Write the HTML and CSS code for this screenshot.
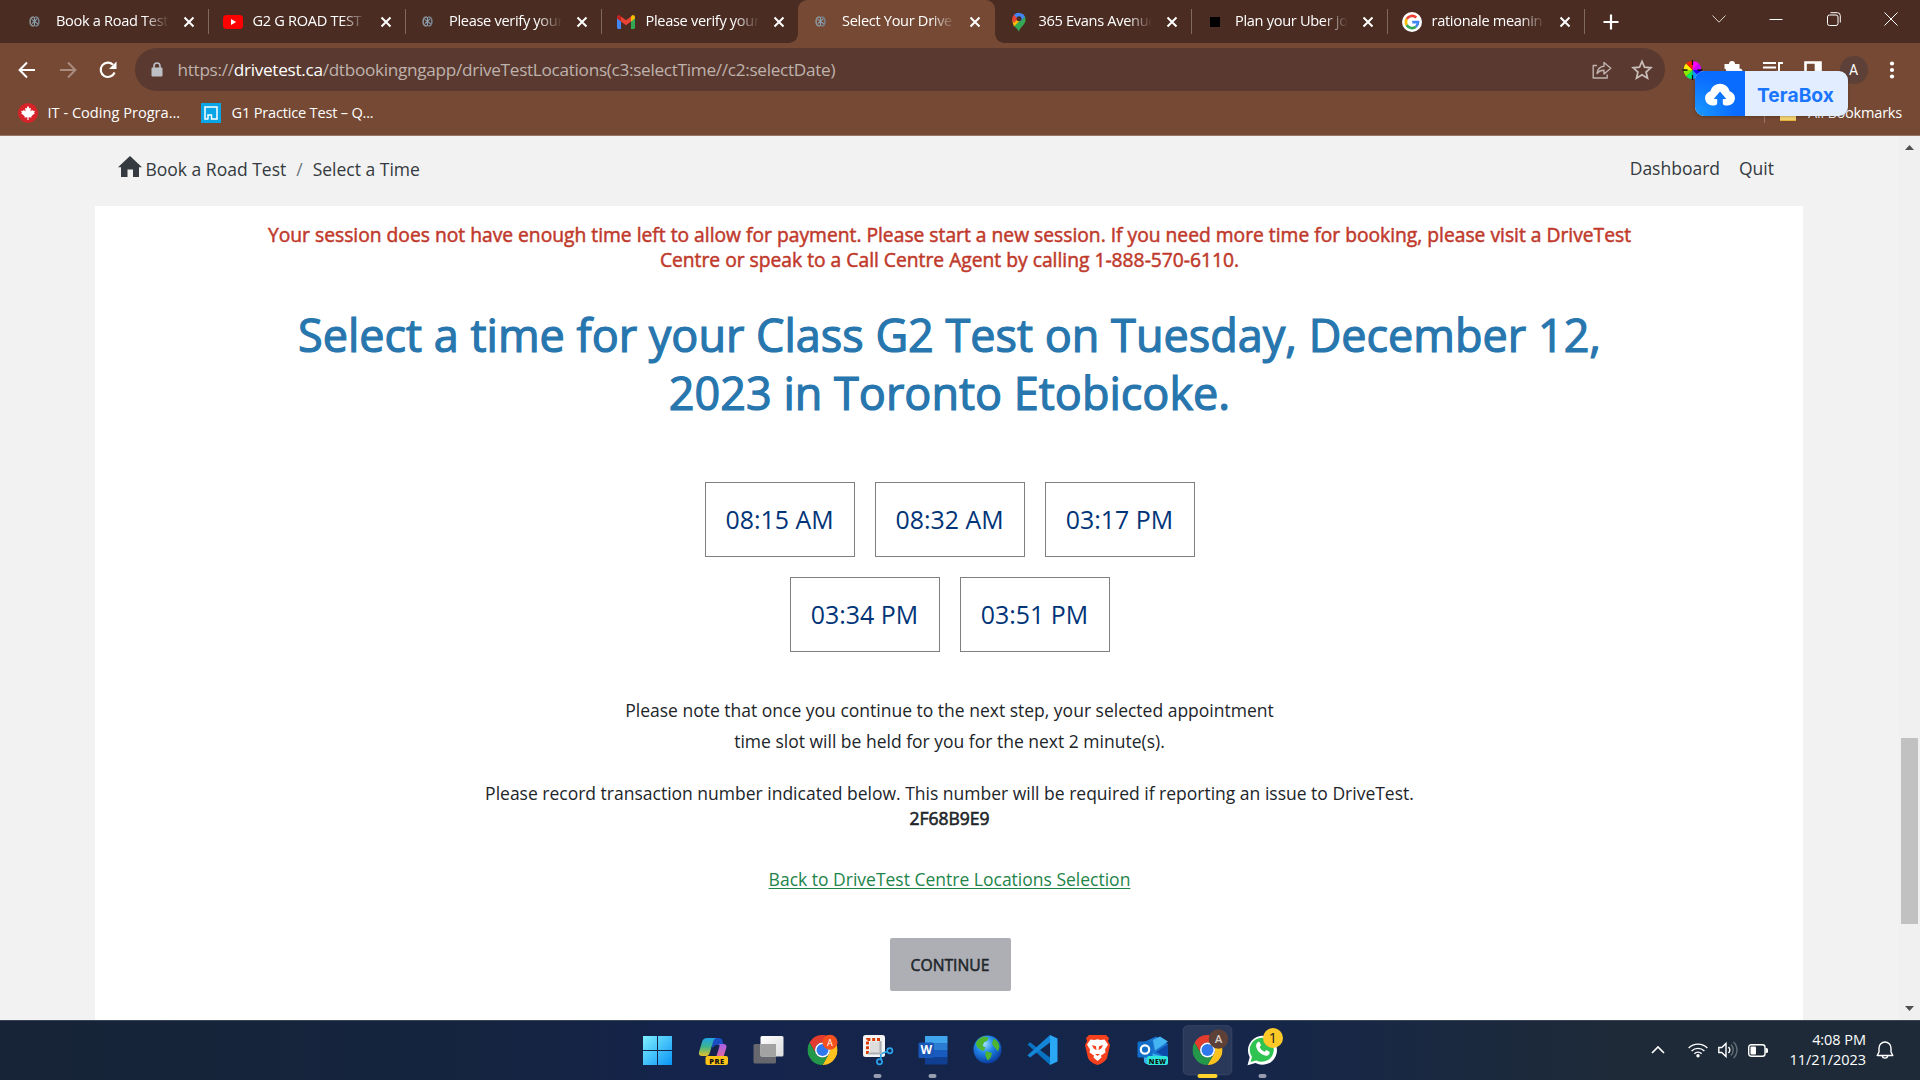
FILE: index.html
```
<!DOCTYPE html>
<html lang="en">
<head>
<meta charset="utf-8">
<title>Select Your DriveTest Time</title>
<link rel="stylesheet" href="styles.css">
</head>
<body>
<svg class="defs" width="0" height="0">
  <symbol id="close" viewBox="0 0 12 12"><path d="M1.5 1.5l9 9M10.5 1.5l-9 9" stroke="#fff" stroke-width="2" fill="none"/></symbol>
  <symbol id="drive" viewBox="0 0 12 12"><g fill="none" stroke-width="1.7"><path d="M5.4 1C2 1 1.200 3.500 1.200 6s1 5 4.200 5" stroke="#8d9296"/><path d="M6.800 1C10 1 10.800 3.500 10.800 6s-1 5-4 5" stroke="#76828c"/><path d="M3 3.700l6.500 4.800M3.500 8.200L8.800 3.200M6 1v10" stroke="#8aa0ae" stroke-width="1.200"/></g></symbol>
  <symbol id="chrome" viewBox="-15 -15 30 30">
    <path d="M-13-7.500A15 15 0 0 1 13-7.500L0-7.500A7.500 7.500 0 0 0-6.500 3.750Z" fill="#e33b2e"/>
    <path d="M-13-7.500A15 15 0 0 1 13-7.500L0-7.500A7.500 7.500 0 0 0-6.500 3.750Z" fill="#fcc31e" transform="rotate(120)"/>
    <path d="M-13-7.500A15 15 0 0 1 13-7.500L0-7.500A7.500 7.500 0 0 0-6.500 3.750Z" fill="#23974a" transform="rotate(240)"/>
    <circle r="7.500" fill="#fff"/><circle r="6" fill="#2f78ee"/>
  </symbol>
</svg>

<header class="browser">
  <div class="tabstrip">
    <div class="tab"><svg class="fav fav-s"><use href="#drive"/></svg><span class="title">Book a Road Test</span><svg class="x"><use href="#close"/></svg></div>
    <div class="tab"><svg class="fav" viewBox="0 0 20 20"><rect y="3" width="20" height="14" rx="3.500" fill="#f00"/><path d="M8 7l5.200 3L8 13z" fill="#fff"/></svg><span class="title">G2 G ROAD TEST</span><svg class="x"><use href="#close"/></svg></div>
    <div class="tab"><svg class="fav fav-s"><use href="#drive"/></svg><span class="title">Please verify your</span><svg class="x"><use href="#close"/></svg></div>
    <div class="tab no-sep"><svg class="fav" viewBox="0 0 20 20"><path d="M1 6v9.500A1.500 1.500 0 0 0 2.500 17H5V8z" fill="#4285f4"/><path d="M19 6v9.500a1.500 1.500 0 0 1-1.500 1.500H15V8z" fill="#34a853"/><path d="M15 4.500v5l4-3V5a2 2 0 0 0-3.200-1.600z" fill="#fbbc04"/><path d="M5 9.500v-5l5 3.700 5-3.700v5l-5 3.800z" fill="#ea4335"/><path d="M1 5v1.500l4 3v-5L4.200 3.400A2 2 0 0 0 1 5z" fill="#c5221f"/></svg><span class="title">Please verify your</span><svg class="x"><use href="#close"/></svg></div>
    <div class="tab active"><svg class="fav fav-s"><use href="#drive"/></svg><span class="title">Select Your Drive</span><svg class="x"><use href="#close"/></svg></div>
    <div class="tab"><svg class="fav" viewBox="0 0 20 20"><path d="M10 20c0-4 5.500-6.500 6.500-11a6.800 6.800 0 0 0-1-5L5 14c2.200 2 4 3.500 5 6z" fill="#34a853"/><path d="M5 14.500L12 7.500 8 4 3.400 8c.1 2.500.8 4.500 1.600 6.500z" fill="#fbbc04"/><path d="M3.500 9A7 7 0 0 1 5.200 2.500L9.500 6 5 11z" fill="#ea4335"/><path d="M5 2.800A6.800 6.800 0 0 1 16 4.700L11.500 9.500 8 6z" fill="#4285f4"/><circle cx="10" cy="6.800" r="2.500" fill="#4a2c22"/></svg><span class="title">365 Evans Avenue</span><svg class="x"><use href="#close"/></svg></div>
    <div class="tab"><svg class="fav" viewBox="0 0 20 20"><path d="M5 5h10v10H5z"/></svg><span class="title">Plan your Uber jo</span><svg class="x"><use href="#close"/></svg></div>
    <div class="tab"><svg class="fav" viewBox="0 0 20 20"><circle cx="10" cy="10" r="10" fill="#fff"/><g fill="none" stroke-width="2.600"><path d="M14.300 5.700A6.100 6.100 0 0 0 4.700 7" stroke="#ea4335"/><path d="M4.700 7a6.100 6.100 0 0 0 0 6" stroke="#fbbc05"/><path d="M4.700 13a6.100 6.100 0 0 0 9.200 1.700" stroke="#34a853"/><path d="M10.200 10.100h5.900a6.100 6.100 0 0 1-2.200 4.600" stroke="#4285f4"/></g></svg><span class="title">rationale meanin</span><svg class="x"><use href="#close"/></svg></div>
    <svg class="plus" viewBox="0 0 16 16"><path d="M8 0.500v15M0.500 8h15" stroke="#fff" stroke-width="2.200"/></svg>
    <div class="winctl">
      <svg viewBox="0 0 14 14"><path d="M.5 3.500L7 10.200l6.500-6.700" fill="none" stroke="#d9d2cf"/></svg>
      <svg viewBox="0 0 14 14"><path d="M.5 7.500h13" stroke="#fff"/></svg>
      <svg viewBox="0 0 14 14"><g fill="none" stroke="#fff"><rect x=".5" y="3" width="10.500" height="10.500" rx="2"/><path d="M3.500.7h6.800a3 3 0 0 1 3 3v6.800"/></g></svg>
      <svg viewBox="0 0 14 14"><path d="M.5.500l13 13M13.500.500l-13 13" stroke="#fff"/></svg>
    </div>
  </div>

  <div class="toolbar">
    <nav class="navbtns">
      <svg viewBox="0 0 18 18"><path d="M17 9H2M9 1.500L1.600 9 9 16.500" fill="none" stroke="#fff" stroke-width="2"/></svg>
      <svg viewBox="0 0 18 18"><path d="M1 9h15M9 1.500L16.400 9 9 16.500" fill="none" stroke="#a98b7f" stroke-width="2"/></svg>
      <svg viewBox="0 0 18 18"><path d="M15.600 11.500A7.200 7.200 0 1 1 14 3.700" fill="none" stroke="#fff" stroke-width="2.100"/><path d="M17.500.500V8H10z" fill="#fff"/></svg>
    </nav>
    <div class="omnibox">
      <svg class="lock" viewBox="0 0 12 15"><path d="M3 6V4a3 3 0 0 1 6 0v2" fill="none" stroke="#bdc1c6" stroke-width="1.600"/><rect x=".5" y="5.500" width="11" height="9" rx="1.200" fill="#bdc1c6"/></svg>
      <span class="url">https://<b>drivetest.ca</b>/dtbookingngapp/driveTestLocations(c3:selectTime//c2:selectDate)</span>
      <svg class="share" viewBox="0 0 20 18"><g fill="none" stroke="#bfb2ad" stroke-width="1.400" stroke-linejoin="round"><path d="M5 4.500H1.200V17h14v-3.500"/><path d="M5 12.500c.5-4.500 3-7 7-7.300V1.500L18.800 7.300 12 13V9.300c-3-.2-5 .7-7 3.200z"/></g></svg>
      <svg class="star" viewBox="0 0 20 20"><path d="M10 2.200l2.300 5.300 5.700.5-4.300 3.800 1.300 5.600-5-3-5 3 1.300-5.600L2 8l5.700-.5z" fill="none" stroke="#c9bdb8" stroke-width="1.600"/></svg>
    </div>
    <div class="ext">
      <svg viewBox="0 0 24 24"><g transform="translate(11.500 12)"><path d="M0 0L0-9A9 9 0 0 1 6.400-6.400z" fill="#f0f"/><path d="M0 0L6.400-6.400A9 9 0 0 1 9 0z" fill="#c0f"/><path d="M0 0H9A9 9 0 0 1 6.400 6.400z" fill="#20f"/><path d="M0 0L6.400 6.400A9 9 0 0 1 0 9z" fill="#09f"/><path d="M0 0V9A9 9 0 0 1-6.400 6.400z" fill="#0e6"/><path d="M0 0L-6.400 6.400A9 9 0 0 1-9 0z" fill="#8e0"/><path d="M0 0H-9A9 9 0 0 1-6.400-6.400z" fill="#fe0"/><path d="M0 0L-6.400-6.400A9 9 0 0 1 0-9z" fill="#f20"/><path d="M0-10v5M0 5v5M-10 0h5M5 0h5" stroke="#111" stroke-width="1.300"/></g></svg>
      <svg viewBox="0 0 24 24"><path d="M3.500 6H8a3 3 0 1 1 6 0h4.500v4.500a3 3 0 1 1 0 6V20h-15v-4a3 3 0 0 0 0-5.500z" fill="#fff"/></svg>
      <svg viewBox="0 0 24 24"><path d="M2 5h13M2 9.500h13M2 14h8M22 5h-4v10" fill="none" stroke="#fff" stroke-width="2"/><circle cx="15.800" cy="15.500" r="2.800" fill="#fff"/></svg>
      <svg viewBox="0 0 24 24"><path d="M4.500 4.500h15v13h-15zM15 4.500v13M17 4.500v13" fill="none" stroke="#fff" stroke-width="2.600"/></svg>
    </div>
    <span class="avatar">A</span>
    <svg class="dots" viewBox="0 0 6 18"><g fill="#fff"><circle cx="3" cy="2.500" r="2.100"/><circle cx="3" cy="9" r="2.100"/><circle cx="3" cy="15.500" r="2.100"/></g></svg>
  </div>

  <div class="bookmarks">
    <svg class="bm-i" viewBox="0 0 20 20"><circle cx="10" cy="10" r="10" fill="#d8232a"/><path d="M10 2.800l1.500 2.800 1.500-.7-.6 3.600 2-1.800.5 1.200 2-.2-.8 2 .8.600-3.600 3 .3 1.300-3-.4V17h-1.200v-2.800l-3 .4.300-1.300-3.600-3 .8-.6-.8-2 2 .2.500-1.200 2 1.800L7 4.900l1.500.7z" fill="#fff"/></svg>
    <span class="bm bm-1">IT - Coding Progra...</span>
    <svg class="bm-i" viewBox="0 0 20 20"><path d="M0 0h20v20H0z" fill="#09a5e6"/><path d="M7.500 16H4V4h12v12h-5.500v-4H7v4" fill="none" stroke="#fff" stroke-width="1.500"/></svg>
    <span class="bm bm-2">G1 Practice Test – Q...</span>
    <span class="bm-right"><i class="bm-sep"></i><svg class="folder" viewBox="0 0 16 16"><path d="M0 1.500h6l2 2h8V16H0z" fill="#f8d775"/><path d="M0 14.800h16V16H0z" fill="#e2b23a"/></svg><span class="bm bm-3">All Bookmarks</span></span>
  </div>

  <div class="terabox">
    <span class="tb-icon"><svg viewBox="0 0 30 25"><path d="M9 24.500H7.500A7.300 7.300 0 0 1 5.300 10.200 10 10 0 0 1 24.700 10.200 7.300 7.300 0 0 1 22.500 24.500h-2.200c-1.800 0-2.500-1-2.500-2.500v-4h3.500L15 10.500 8.700 18h3.500v4c0 1.500-1 2.500-3.200 2.500z" fill="#fff"/></svg></span>
    <span class="tb-text">TeraBox</span>
  </div>
</header>

<main class="page">
  <div class="content">
    <div class="crumbs">
      <svg class="home" viewBox="0 0 24 21"><path d="M12 0l12 11.200h-3V21h-6v-7.500H9.500V21h-6.500V11.200H0z" fill="#343a40"/></svg>
      <a class="crumb">Book a Road Test</a><span class="slash">/</span><a class="crumb">Select a Time</a>
      <nav class="links"><a>Dashboard</a><a>Quit</a></nav>
    </div>
    <section class="panel">
      <p class="alert">Your session does not have enough time left to allow for payment. Please start a new session. If you need more time for booking, please visit a DriveTest<br>Centre or speak to a Call Centre Agent by calling 1-888-570-6110.</p>
      <h1 class="heading">Select a time for your Class G2 Test on Tuesday, December 12,<br>2023 in Toronto Etobicoke.</h1>
      <div class="slots">
        <button class="slot">08:15 AM</button><button class="slot">08:32 AM</button><button class="slot">03:17 PM</button><button class="slot">03:34 PM</button><button class="slot">03:51 PM</button>
      </div>
      <p class="note">Please note that once you continue to the next step, your selected appointment<br>time slot will be held for you for the next 2 minute(s).</p>
      <p class="trans">Please record transaction number indicated below. This number will be required if reporting an issue to DriveTest.<br><span class="code">2F68B9E9</span></p>
      <a class="back">Back to DriveTest Centre Locations Selection</a>
      <button class="continue">CONTINUE</button>
    </section>
  </div>
  <div class="scrollbar">
    <svg class="arrow" viewBox="0 0 9 5"><path d="M0 5L4.500 0 9 5z" fill="#505050"/></svg>
    <div class="thumb"></div>
    <svg class="arrow arrow-down" viewBox="0 0 9 5"><path d="M0 0L4.500 5 9 0z" fill="#505050"/></svg>
  </div>
</main>

<footer class="taskbar">
  <div class="apps">
    <svg viewBox="0 0 55 60"><defs><linearGradient id="w" x1="0" y1="0" x2="1" y2="1"><stop offset="0" stop-color="#7ff0ff"/><stop offset="1" stop-color="#0a94f5"/></linearGradient></defs><path d="M13 16h14v14H13zM28 16h14v14H28zM13 31h14v14H13zM28 31h14v14H28z" fill="url(#w)"/></svg>
    <svg viewBox="0 0 55 60"><defs><linearGradient id="c1" x1="0" y1="0" x2="0" y2="1"><stop offset="0" stop-color="#1fa3e8"/><stop offset=".5" stop-color="#3fb58a"/><stop offset="1" stop-color="#e6c229"/></linearGradient><linearGradient id="c2" x1="0" y1="0" x2="0" y2="1"><stop offset="0" stop-color="#a560e8"/><stop offset="1" stop-color="#f06a8c"/></linearGradient></defs><path d="M22 18h12c2 0 3 1 3.500 3l1 4h-7c-2 0-3 1-3.500 3z" fill="#1a4fc4"/><path d="M22 18h10c-2 0-3 1-4 4l-3 10c-1 3-2 4-4 4h-4c-2.500 0-3.500-1.500-3-4l3-10c1-3 2.500-4 5-4z" fill="url(#c1)"/><path d="M33 24h5c3 0 4 1.500 3.300 4l-2.500 8c-1 3-2 4-5 4h-5c2-1 2-2 3-5l2.500-8c.5-2 .3-3-1.300-3z" fill="url(#c2)"/><rect x="20.500" y="36" width="22.500" height="9" rx="2" fill="#fcc419"/><text x="31.900" y="43.600" class="badge-t">PRE</text></svg>
    <svg viewBox="0 0 55 60"><defs><linearGradient id="tv" x1="0" y1="0" x2="1" y2="1"><stop offset="0" stop-color="#fff"/><stop offset="1" stop-color="#dcdcdc"/></linearGradient></defs><rect x="13.500" y="24" width="22.500" height="19.500" rx="1.500" fill="#66686d"/><rect x="20.500" y="16" width="23" height="20.500" rx="1.500" fill="url(#tv)"/><path d="M20.500 24H36v12.500H21.500a1 1 0 0 1-1-1z" fill="#a3a3a3"/></svg>
    <svg viewBox="0 0 55 60"><use href="#chrome" x="12.500" y="15" width="30" height="30"/><circle cx="35" cy="22.300" r="7.500" fill="#f4511e"/><text x="35" y="25.500" class="av-t">A</text></svg>
    <svg viewBox="0 0 55 60"><rect x="13" y="15" width="22" height="22" rx="2.500" fill="#f4f4f4"/><rect x="20" y="21.500" width="12" height="12" rx="1" fill="#ddd"/><path d="M17.500 34V19.500H30" fill="none" stroke="#d83b01" stroke-width="3" stroke-dasharray="3 1.800"/><path d="M30.500 21v13M18 33.500h14" stroke="#aab0b5" stroke-width="2"/><g fill="none" stroke="#2aa3ea" stroke-width="1.700"><circle cx="39.800" cy="30.800" r="2.600"/><circle cx="29.500" cy="41.700" r="2.600"/><path d="M30.800 39V34M37 31.500l-5 2"/></g><rect class="pill" x="23.500" y="54" width="8" height="4" rx="2"/></svg>
    <svg viewBox="0 0 55 60"><path d="M20 16h22.500v7.500H20z" fill="#41a5ee"/><path d="M20 23.200h22.500v7.500H20z" fill="#2b7cd3"/><path d="M20 30.200h22.500v7.500H20z" fill="#185abd"/><path d="M20 37.200h22.500V43a1.500 1.500 0 0 1-1.500 1.500H20z" fill="#103f91"/><rect x="13.500" y="22.500" width="15.500" height="15.500" rx="1.500" fill="#1857b8"/><text x="21.200" y="34.300" class="w-t">W</text><rect class="pill" x="23.500" y="54" width="8" height="4" rx="2"/></svg>
    <svg viewBox="0 0 55 60"><defs><radialGradient id="g" cx=".4" cy=".3" r=".8"><stop offset="0" stop-color="#9fe0ff"/><stop offset=".4" stop-color="#1f86ea"/><stop offset="1" stop-color="#062a8c"/></radialGradient></defs><circle cx="27.500" cy="29.500" r="14" fill="url(#g)"/><path d="M16 23c2-4 5-6 8-6.500l4.500 1-1 3-3.500 2-1.500 3.500 3 1.500-2 3.500c-4-1.500-7.500-4-7.500-8zM33.500 18.500c3.500 1.500 5.500 4.500 6 8l-1.500 5-3-3.500-3-4zM26 31l6 2-1 4-3 3.500c-2-2.500-3.500-6-2-9.500z" fill="#4db52f"/></svg>
    <svg viewBox="0 0 55 60"><path d="M12.500 24.500l2.500-2.200 20 15.200V45z" fill="#0a72c2"/><path d="M12.500 35.200l2.500 2.300L35 22.500V15z" fill="#1486d8"/><path d="M35 15l7.500 3.500v23L35 45z" fill="#2aa8f5"/></svg>
    <svg viewBox="0 0 55 60"><path d="M19 15h17l3 3-1 3 2 4-3 13c-1 3-6 6-9.500 7-3.500-1-8.500-4-9.500-7l-3-13 2-4-1-3z" fill="#f4401c"/><path d="M20.500 19.500l4 .5 3-.8 3 .8 4-.5 3.500 5-3 5 .5 3-4.500 3 .5 2-4 3.500-4-3.500.5-2-4.500-3 .5-3-3-5z" fill="#fff"/><path d="M22 25l4 1.200.5 4-3-2zM33 25l-4 1.200-.5 4 3-2zM25 34h5l-2.500 2z" fill="#f4401c"/></svg>
    <svg viewBox="0 0 55 60"><path d="M17 23l14-6.500 12 7.500v17H19z" fill="#1a74d0"/><path d="M28 20l7-3.500 8 5-13 9z" fill="#45b4f2"/><path d="M43 24v14L31 32z" fill="#0d4ba8"/><path d="M19 31l24 7v4l-2 2H21l-2-2z" fill="#38b5ee"/><rect x="12.500" y="21.500" width="15" height="16" rx="1.500" fill="#126fc9"/><circle cx="20" cy="29.500" r="4.200" fill="none" stroke="#fff" stroke-width="2.200"/><rect x="22" y="36" width="21" height="9" rx="2" fill="#2ee6dc"/><text x="32.700" y="43.500" class="badge-t badge-n">NEW</text></svg>
    <svg viewBox="0 0 55 60"><rect x="3" y="5.500" width="49" height="49.500" rx="5" fill="#fff" fill-opacity=".09" stroke="#fff" stroke-opacity=".08"/><use href="#chrome" x="12.500" y="15" width="30" height="30"/><circle cx="38.500" cy="19" r="9.800" fill="#5d4037"/><text x="38.500" y="23" class="av-t2">A</text><rect x="17.500" y="54" width="20" height="4" rx="2" fill="#fdd32c"/></svg>
    <svg viewBox="0 0 55 60"><path d="M12.500 45.200l2.200-8A14.500 14.500 0 1 1 20.500 43z" fill="#fff"/><path d="M15.600 42l1.400-5.200A12 12 0 1 1 21.300 40.500z" fill="#2fc351"/><path d="M22.500 22.500c1-1 2-.8 2.500.3l1 2.400-1.300 2c1 2.200 2.800 3.700 5 4.600l1.700-1.700 3.200 1.600c.4 2.500-1.600 4-3.600 4-4.800-.3-9.600-5.200-9.900-9.600 0-1.500.6-2.800 1.400-3.600z" fill="#fff"/><circle cx="38" cy="18" r="10" fill="#fdc928"/><text x="38" y="23" class="one-t">1</text><rect class="pill" x="23.500" y="54" width="8" height="4" rx="2"/></svg>
  </div>
  <div class="tray">
    <svg class="t-chev" viewBox="0 0 14 8"><path d="M1 7l6-6 6 6" fill="none" stroke="#fff" stroke-width="1.700"/></svg>
    <svg class="t-wifi" viewBox="0 0 20 16"><g fill="none" stroke="#fff" stroke-width="1.400"><path d="M.7 6a13 13 0 0 1 18.600 0M3.600 9a9 9 0 0 1 12.800 0M6.400 11.700a5 5 0 0 1 7.200 0"/></g><circle cx="10" cy="13.700" r="1.700" fill="#fff"/></svg>
    <svg class="t-vol" viewBox="0 0 20 18"><g fill="none" stroke="#fff" stroke-width="1.400"><path d="M.8 6.500h3L8 2.500v13l-4.200-4h-3z"/><path d="M10.500 6a4.500 4.500 0 0 1 0 6"/><path d="M13 3.500a8 8 0 0 1 0 11M15.500 1a11 11 0 0 1 0 16" stroke="#66707a"/></g></svg>
    <svg class="t-bat" viewBox="0 0 20 13"><rect x=".7" y=".7" width="16.300" height="11.600" rx="2.500" fill="none" stroke="#fff" stroke-width="1.400"/><rect x="2.500" y="2.500" width="5.500" height="8" rx="1" fill="#fff"/><path d="M17.500 4h1a1.500 1.500 0 0 1 1.500 1.500v2A1.500 1.500 0 0 1 18.500 9h-1z" fill="#fff"/></svg>
    <div class="clock"><span>4:08 PM</span><span>11/21/2023</span></div>
    <svg class="t-bell" viewBox="0 0 18 19"><path d="M1.200 14.500h15.600L15 11V7A6 6 0 0 0 3 7v4zM6.200 15a2.900 2.900 0 0 0 5.600 0" fill="none" stroke="#fff" stroke-width="1.400" stroke-linejoin="round"/></svg>
  </div>
</footer>
</body>
</html>
```
FILE: styles.css
```
* { box-sizing: border-box; }
body { margin: 0; width: 1920px; height: 1080px; overflow: hidden; display: flex; flex-direction: column; font-family: "Open Sans", "Noto Sans", sans-serif; }
p, h1 { margin: 0; }
svg { display: block; flex: none; }
button { font-family: inherit; padding: 0; }
.defs { position: absolute; }

/* browser chrome */
.browser { position: relative; height: 136px; flex: none; background: #754933; border-bottom: 1px solid #97776a; color: #fff; }
.tabstrip { display: flex; align-items: center; height: 43px; padding-left: 12px; background: #4a2c22; }
.tab { position: relative; flex: none; display: flex; align-items: center; width: 196.5px; height: 43px; }
.tab::after { content: ""; position: absolute; right: -.5px; top: 9px; width: 1px; height: 25px; background: #80695f; }
.tab.no-sep::after, .tab.active::after { display: none; }
.tab.active { background: #754933; border-radius: 9px 9px 0 0; }
.tab.active::before { content: ""; position: absolute; left: -9px; right: -9px; bottom: 0; height: 9px; background: radial-gradient(circle at 0 0, transparent 8.500px, #754933 9px) left / 9px 9px no-repeat, radial-gradient(circle at 100% 0, transparent 8.500px, #754933 9px) right / 9px 9px no-repeat; }
.fav { width: 20px; height: 20px; margin-left: 14px; margin-right: 10px; }
.fav-s { width: 11px; height: 11px; margin-left: 17px; margin-right: 16px; }
.title { width: 113px; height: 24px; padding-bottom: 2px; overflow: hidden; white-space: nowrap; font-size: 14.600px; line-height: 21px; letter-spacing: -.32px; -webkit-mask-image: linear-gradient(90deg, #000 78%, transparent); mask-image: linear-gradient(90deg, #000 78%, transparent); }
.x { width: 12px; height: 12px; margin-left: 14px; }
.plus { width: 16px; height: 16px; margin-left: 19px; }
.winctl { display: flex; gap: 43.400px; margin-left: auto; padding-right: 22px; padding-bottom: 6px; }
.winctl svg { width: 14px; height: 14px; }

.toolbar { display: flex; align-items: center; height: 48px; padding: 5px 24px 0 18px; }
.navbtns { display: flex; gap: 22.500px; }
.navbtns svg { width: 18px; height: 18px; }
.omnibox { display: flex; align-items: center; width: 1530px; height: 43px; margin-left: 18px; padding: 0 12px 0 16px; border-radius: 22px; background: #5a3a30; }
.lock { width: 12px; height: 15px; }
.url { margin-left: 14.500px; font-size: 17.200px; letter-spacing: -.3px; line-height: 40px; color: #bfb2ad; white-space: nowrap; }
.url b { font-weight: 400; color: #fff; }
.share { width: 20px; height: 18px; margin-left: auto; }
.star { width: 22px; height: 22px; margin-left: 19px; }
.ext { display: flex; gap: 16px; margin-left: 16px; }
.ext svg { width: 24px; height: 24px; }
.avatar { display: flex; align-items: center; justify-content: center; width: 28px; height: 28px; margin-left: 14.500px; border-radius: 50%; background: #5d4037; font: 14px Roboto, sans-serif; }
.dots { width: 6px; height: 18px; margin-left: auto; margin-right: 1px; }

.bookmarks { display: flex; align-items: center; height: 44px; padding: 0 18px; }
.bm-i { width: 20px; height: 20px; }
.bm { padding-bottom: 1.500px; font-size: 14.600px; line-height: 22px; letter-spacing: 0; white-space: nowrap; }
.bm-1 { width: 133px; margin: 0 20.500px 0 9.500px; }
.bm-2 { margin-left: 10.500px; letter-spacing: -.2px; }
.bm-3 { letter-spacing: -.25px; }
.bm-right { display: flex; align-items: center; margin-left: auto; }
.bm-sep { width: 1px; height: 20px; margin-right: 15px; background: #97776a; }
.folder { width: 16px; height: 16px; margin-right: 12px; }

.terabox { position: absolute; left: 1695px; top: 71px; display: flex; width: 153px; height: 45px; border-radius: 9px; overflow: hidden; box-shadow: 0 1px 3px rgba(0,0,0,.25); background: #e2eeff; }
.tb-icon { display: flex; align-items: center; justify-content: center; width: 50px; background: radial-gradient(circle at 0 100%, #1a9bff, #0a6cff 60%); }
.tb-icon svg { width: 30px; height: 25px; }
.tb-text { display: flex; align-items: center; padding-left: 12px; padding-top: 2px; font: 650 19.200px Inter, sans-serif; color: #1a75ff; letter-spacing: .05px; }

/* page */
.page { display: flex; flex: none; height: 884px; background: #f2f2f2; font-weight: 400; font-size: 17.500px; line-height: 25px; color: #212529; }
.content { width: 1899px; padding: 0 96px 0 95px; }
.crumbs { display: flex; align-items: flex-start; height: 70px; padding: 20px 29px 0 23px; color: #343a40; }
.home { width: 24px; height: 21px; margin-right: 3.500px; }
.crumb, .slash { padding-top: 1px; }
.slash { margin: 0 10px; color: #6c757d; }
.links { display: flex; gap: 19px; margin-left: auto; }
.panel { display: flex; flex-direction: column; align-items: center; width: 1708px; height: 814px; padding: 16px 0 0 1px; background: #fff; text-align: center; white-space: nowrap; }
.alert { font-size: 19.250px; line-height: 25px; color: #c0392b; -webkit-text-stroke: .5px #c0392b; }
.heading { margin-top: 34px; font-size: 45px; line-height: 58px; font-weight: 400; color: #2776ae; -webkit-text-stroke: 1.200px #2776ae; }
.slots { display: flex; flex-wrap: wrap; justify-content: center; gap: 20px; width: 520px; margin-top: 60px; }
.slot { width: 150px; height: 75px; padding-bottom: 2px; border: 1px solid #808080; background: #fff; font-size: 24.900px; font-weight: 400; color: #003478; }
.note { margin-top: 43px; line-height: 31px; }
.trans { margin-top: 23.500px; line-height: 25px; }
.code { -webkit-text-stroke: .6px #212529; }
.back { margin-top: 36.500px; color: #1e8449; text-decoration: underline; text-underline-offset: 2px; }
.continue { width: 121px; height: 53px; margin: 46px 0 0 1px; border: 0; border-radius: 2px; background: #adafb5; font-size: 15.700px; font-weight: 400; color: #212529; -webkit-text-stroke: .5px #212529; }
.scrollbar { display: flex; flex-direction: column; align-items: center; width: 21px; padding: 9px 0 9px; background: #f0f0f0; }
.arrow { width: 9px; height: 5px; }
.arrow-down { margin-top: auto; }
.thumb { width: 17px; height: 186px; margin-top: 588px; background: #c1c1c1; }

/* taskbar */
.taskbar { display: flex; flex: none; height: 60px; border-top: 1px solid #3a4556; background: linear-gradient(90deg, #172437, #15243f 25%, #14244c 36%, #15264a 65%, #1a2840 75%, #1e2a37 85%); color: #fff; }
.apps { display: flex; margin: -1px 0 0 630px; }
.apps svg { width: 55px; height: 60px; }
.pill { fill: #989db0; }
.apps text { text-anchor: middle; }
.badge-t { font: 800 7.500px "Open Sans", sans-serif; letter-spacing: .4px; fill: #111; }
.badge-n { font-size: 6.800px; }
.av-t { font: 9px Roboto, sans-serif; fill: #fff; }
.av-t2 { font: 500 11.500px Roboto, sans-serif; fill: #d8cdc9; }
.w-t { font: 700 12px "Open Sans", sans-serif; fill: #fff; }
.one-t { font: 14.500px "Open Sans", sans-serif; fill: #222; }
.tray { display: flex; align-items: center; margin-left: auto; padding-right: 26px; padding-bottom: 1px; }
.t-chev { width: 14px; height: 8px; }
.t-wifi { width: 20px; height: 16px; margin-left: 23px; }
.t-vol { width: 20px; height: 18px; margin-left: 10px; }
.t-bat { width: 20px; height: 13px; margin-left: 10px; }
.clock { display: flex; flex-direction: column; width: 98px; padding-bottom: 1px; text-align: right; font-size: 14.500px; line-height: 20px; letter-spacing: -.05px; }
.t-bell { width: 18px; height: 19px; margin-left: 10px; }
```
